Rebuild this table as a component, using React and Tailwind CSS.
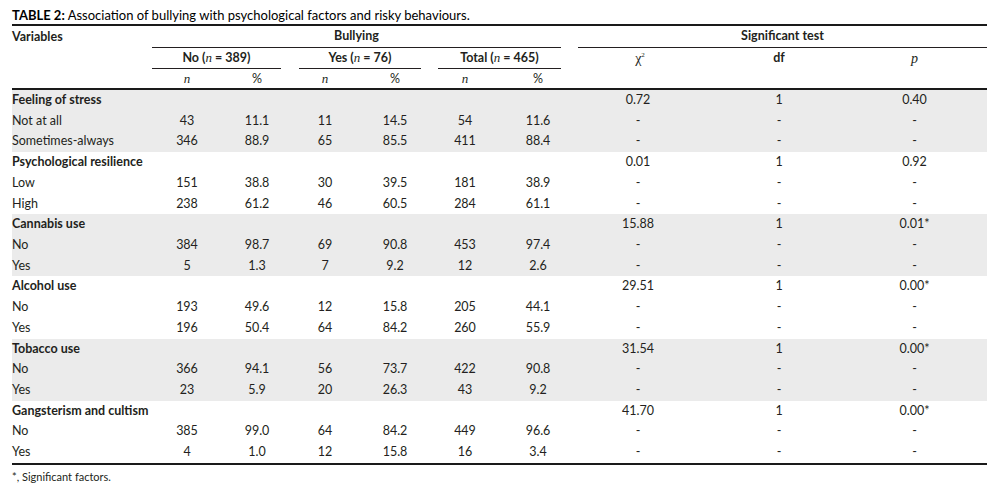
import React from 'react'

const cols = 'grid grid-cols-[140px_70px_70px_66px_74px_66px_80px_124px_154px_131px]'

const groups = [
  {
    label: 'Feeling of stress',
    test: ['0.72', '1', '0.40'],
    rows: [
      ['Not at all', '43', '11.1', '11', '14.5', '54', '11.6'],
      ['Sometimes-always', '346', '88.9', '65', '85.5', '411', '88.4'],
    ],
  },
  {
    label: 'Psychological resilience',
    test: ['0.01', '1', '0.92'],
    rows: [
      ['Low', '151', '38.8', '30', '39.5', '181', '38.9'],
      ['High', '238', '61.2', '46', '60.5', '284', '61.1'],
    ],
  },
  {
    label: 'Cannabis use',
    test: ['15.88', '1', '0.01*'],
    rows: [
      ['No', '384', '98.7', '69', '90.8', '453', '97.4'],
      ['Yes', '5', '1.3', '7', '9.2', '12', '2.6'],
    ],
  },
  {
    label: 'Alcohol use',
    test: ['29.51', '1', '0.00*'],
    rows: [
      ['No', '193', '49.6', '12', '15.8', '205', '44.1'],
      ['Yes', '196', '50.4', '64', '84.2', '260', '55.9'],
    ],
  },
  {
    label: 'Tobacco use',
    test: ['31.54', '1', '0.00*'],
    rows: [
      ['No', '366', '94.1', '56', '73.7', '422', '90.8'],
      ['Yes', '23', '5.9', '20', '26.3', '43', '9.2'],
    ],
  },
  {
    label: 'Gangsterism and cultism',
    test: ['41.70', '1', '0.00*'],
    rows: [
      ['No', '385', '99.0', '64', '84.2', '449', '96.6'],
      ['Yes', '4', '1.0', '12', '15.8', '16', '3.4'],
    ],
  },
]

const N = () => <span className="font-['Liberation_Serif',serif] italic font-normal text-[13px]">n</span>

const TestCells = ({ values }) => (
  <>
    <div className="text-center pr-[4px]">{values[0]}</div>
    <div className="text-center">{values[1]}</div>
    <div className="text-center pr-[14px]">{values[2]}</div>
  </>
)

const Group = ({ group, shaded }) => (
  <div className={shaded ? 'bg-[#ebebeb]' : 'bg-white'}>
    <div className={`${cols} h-[20.72px] items-center`}>
      <div className="font-bold whitespace-nowrap">{group.label}</div>
      <div className="col-span-6" />
      <TestCells values={group.test} />
    </div>
    {group.rows.map((row) => (
      <div key={row[0]} className={`${cols} h-[20.72px] items-center`}>
        <div className="whitespace-nowrap">{row[0]}</div>
        {row.slice(1).map((v, i) => (
          <div key={i} className="text-center">{v}</div>
        ))}
        <TestCells values={['-', '-', '-']} />
      </div>
    ))}
  </div>
)

export default function App() {
  return (
    <div className="w-[993px] h-[501px] bg-white font-['Lato','Open_Sans',sans-serif] text-[12.5px] text-[#231f20] overflow-hidden">
      <div className="ml-[12px] w-[975px]">
        {/* Title */}
        <div className="h-[24px] flex items-end pb-[2px] text-[13px] text-black leading-none whitespace-pre">
          <span className="font-bold">TABLE 2:</span>
          <span> Association of bullying with psychological factors and risky behaviours.</span>
        </div>
        <div className="h-[2px] bg-[#1a1a1a]" />

        {/* Header row 1 */}
        <div className={`${cols} h-[22px]`}>
          <div className="font-bold flex items-center">Variables</div>
          <div className="col-span-6 mr-[17px] border-b border-[#231f20] font-bold flex items-center justify-center">
            Bullying
          </div>
          <div className="col-span-3 border-b border-[#231f20] font-bold flex items-center justify-center">
            Significant test
          </div>
        </div>

        {/* Header row 2 */}
        <div className={`${cols} h-[21px]`}>
          <div />
          <div className="col-span-2 mr-[11px] border-b border-[#231f20] font-bold flex items-center justify-center">
            <span>No (<N /> = 389)</span>
          </div>
          <div className="col-span-2 ml-[7px] mr-[11px] border-b border-[#231f20] font-bold flex items-center justify-center">
            <span>Yes (<N /> = 76)</span>
          </div>
          <div className="col-span-2 ml-[6px] mr-[17px] border-b border-[#231f20] font-bold flex items-center justify-center">
            <span>Total (<N /> = 465)</span>
          </div>
          <div className="flex items-center justify-center font-['Liberation_Serif',serif] text-[14px]">
            <span>
              χ<sup className="text-[7px] -top-[6px]">2</sup>
            </span>
          </div>
          <div className="flex items-center justify-center font-bold">df</div>
          <div className="flex items-center justify-center pr-[14px] font-['Liberation_Serif',serif] italic text-[14px]">
            p
          </div>
        </div>

        {/* Header row 3 */}
        <div className={`${cols} h-[19px] items-center`}>
          <div />
          <div className="text-center"><N /></div>
          <div className="text-center">%</div>
          <div className="text-center"><N /></div>
          <div className="text-center">%</div>
          <div className="text-center"><N /></div>
          <div className="text-center">%</div>
        </div>
        <div className="h-[2px] bg-[#1a1a1a]" />

        {/* Body */}
        {groups.map((g, i) => (
          <Group key={g.label} group={g} shaded={i % 2 === 0} />
        ))}
        <div className="h-[2px] bg-[#1a1a1a]" />

        {/* Footnote */}
        <div className="h-[24px] flex items-center text-[11px]">*, Significant factors.</div>
      </div>
    </div>
  )
}
